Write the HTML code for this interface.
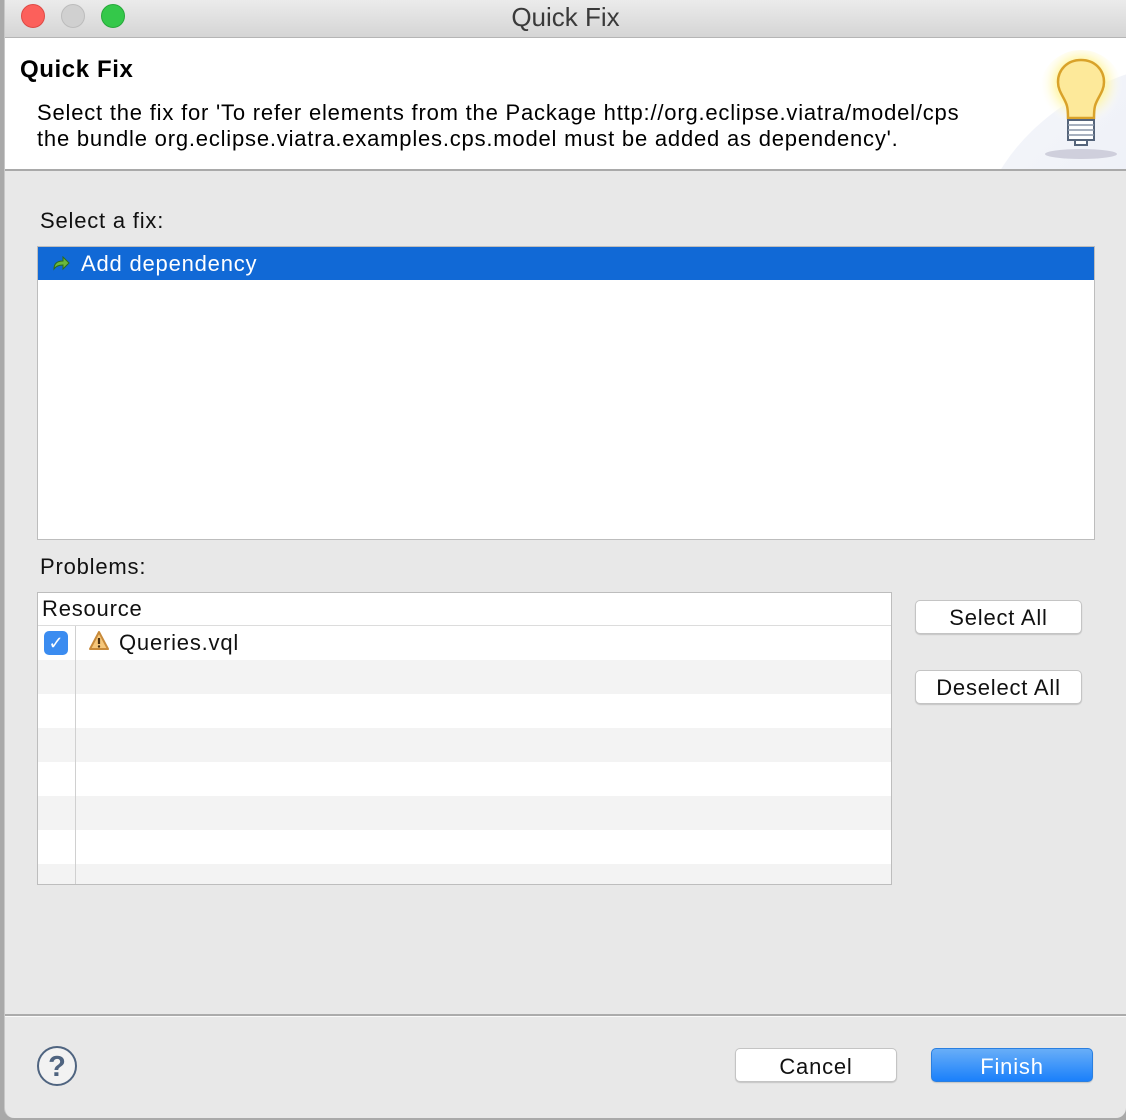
<!DOCTYPE html>
<html><head><meta charset="utf-8"><style>
*{margin:0;padding:0;box-sizing:border-box}
body{width:1126px;height:1120px;background:#a9a9a9;position:relative;overflow:hidden;font-family:"Liberation Sans",Helvetica,Arial,sans-serif;color:#111}
.win{position:absolute;left:4px;top:0;width:1122px;height:1118px;background:#e8e8e8;border-radius:0 0 10px 10px;overflow:hidden;border-left:1px solid #c8c8c8}
.title{position:absolute;left:0;top:0;width:100%;height:38px;background:linear-gradient(#ebebeb,#d5d5d5);border-bottom:1px solid #b5b5b5;text-align:center;font-size:26px;line-height:34px;color:#3a3a3a}
.tl{position:absolute;top:4px;width:24px;height:24px;border-radius:50%}
.hdr{position:absolute;left:0;top:38px;width:100%;height:133px;background:#fff;border-bottom:2px solid #a9a9a9;overflow:hidden}
.abs{position:absolute}
.t{position:absolute;font-size:22px;letter-spacing:0.8px;white-space:nowrap}
.btn{position:absolute;background:#fff;border:1px solid #c4c4c4;border-radius:5px;font-size:22px;letter-spacing:0.8px;text-align:center;box-shadow:0 1px 1px rgba(0,0,0,.15)}
</style></head><body>
<div class="win">
 <div class="title">Quick Fix
  <div class="tl" style="left:16px;background:#fc605b;border:1px solid #de4a45"></div>
  <div class="tl" style="left:56px;background:#d0d0d0;border:1px solid #bcbcbc"></div>
  <div class="tl" style="left:96px;background:#34c84a;border:1px solid #27a83a"></div>
 </div>
 <div class="hdr">
  <div style="position:absolute;left:970px;top:20px;width:500px;height:400px;border-radius:50%;background:linear-gradient(135deg,#f6f7fb,#dde3f0)"></div>
  <div class="t" style="left:15px;top:18px;font-size:24px;letter-spacing:0.6px;font-weight:bold;color:#000">Quick Fix</div>
  <div class="t" style="left:32px;top:62px;color:#000">Select the fix for 'To refer elements from the Package http://org.eclipse.viatra/model/cps</div>
  <div class="t" style="left:32px;top:88px;color:#000">the bundle org.eclipse.viatra.examples.cps.model must be added as dependency'.</div>
  <svg class="abs" style="left:1030px;top:10px" width="90" height="120" viewBox="0 0 90 120">
   <defs><radialGradient id="g" cx="50%" cy="40%" r="50%"><stop offset="0" stop-color="#fffbd0"/><stop offset=".6" stop-color="#fff6a8" stop-opacity=".8"/><stop offset="1" stop-color="#fff" stop-opacity="0"/></radialGradient></defs>
   <ellipse cx="46" cy="106" rx="36" ry="5" fill="#cfcfdc"/>
   <circle cx="46" cy="44" r="42" fill="url(#g)"/>
   <path d="M46 12c-14 0-23 10-23 22 0 10 7 16 9 24 1 4 1 8 1 12h26c0-4 0-8 1-12 2-8 9-14 9-24 0-12-9-22-23-22z" fill="#fde99a" stroke="#d9a22a" stroke-width="2.5"/>
   <rect x="33" y="72" width="26" height="20" fill="#fff" stroke="#55647a" stroke-width="2"/>
   <path d="M33 77h26M33 82h26M33 87h26" stroke="#8a96a8" stroke-width="1.5"/>
   <rect x="40" y="92" width="12" height="5" fill="#fff" stroke="#55647a" stroke-width="2"/>
  </svg>
 </div>
 <div class="t" style="left:35px;top:208px">Select a fix:</div>
 <div class="abs" style="left:32px;top:246px;width:1058px;height:294px;background:#fff;border:1px solid #bdbdbd">
  <div style="height:33px;background:#1169d6;color:#fff;font-size:22px;letter-spacing:0.8px;line-height:33px;padding-left:43px;position:relative">Add dependency
   <svg class="abs" style="left:14px;top:9px" width="18" height="15" viewBox="0 0 18 15"><path d="M2 13c0-6 4-8 9-8V1l6 6-6 6V9c-4 0-7 1-9 4z" fill="#6ab83c" stroke="#2e6a1a" stroke-width="1"/></svg>
  </div>
 </div>
 <div class="t" style="left:35px;top:554px">Problems:</div>
 <div class="abs" style="left:32px;top:592px;width:855px;height:293px;background:#fff;border:1px solid #bdbdbd;overflow:hidden">
  <div style="height:33px;border-bottom:1px solid #dcdcdc;font-size:22px;letter-spacing:0.8px;line-height:32px;padding-left:4px">Resource</div>
  <div style="height:34px"></div>
  <div style="height:34px;background:#f3f3f3"></div><div style="height:34px"></div>
  <div style="height:34px;background:#f3f3f3"></div><div style="height:34px"></div>
  <div style="height:34px;background:#f3f3f3"></div><div style="height:34px"></div>
  <div style="height:34px;background:#f3f3f3"></div>
  <div class="abs" style="left:37px;top:33px;width:1px;height:260px;background:#d0d0d0"></div>
  <div class="abs" style="left:6px;top:38px;width:24px;height:24px;border-radius:5px;background:#3b8cf0;color:#fff;font-size:18px;text-align:center;line-height:24px">✓</div>
  <svg class="abs" style="left:50px;top:37px" width="22" height="22" viewBox="0 0 22 22"><path d="M11 2L20 19H2z" fill="#f6c77a" stroke="#c88a3a" stroke-width="2" stroke-linejoin="round"/><path d="M11 8v6" stroke="#4a3010" stroke-width="2.2"/><circle cx="11" cy="16.5" r="1.2" fill="#4a3010"/></svg>
  <div class="t" style="left:81px;top:37px">Queries.vql</div>
 </div>
 <div class="btn" style="left:910px;top:600px;width:167px;height:34px;line-height:34px">Select All</div>
 <div class="btn" style="left:910px;top:670px;width:167px;height:34px;line-height:34px">Deselect All</div>
 <div class="abs" style="left:0;top:1014px;width:100%;height:2px;background:#ababab"></div>
 <div class="abs" style="left:0;top:1016px;width:100%;height:1px;background:#fafafa"></div>
 <svg class="abs" style="left:31px;top:1045px" width="42" height="42" viewBox="0 0 42 42"><circle cx="21" cy="21" r="19" fill="#f2f2f2" stroke="#4f6480" stroke-width="2"/><text x="21" y="31" text-anchor="middle" font-family="Liberation Sans" font-weight="bold" font-size="29" fill="#4f6480">?</text></svg>
 <div class="btn" style="left:730px;top:1048px;width:162px;height:34px;line-height:35px">Cancel</div>
 <div class="btn" style="left:926px;top:1048px;width:162px;height:34px;line-height:35px;background:linear-gradient(#68aef8,#1a80fb);border-color:#2a7fe0;color:#fff">Finish</div>
</div>
</body></html>
